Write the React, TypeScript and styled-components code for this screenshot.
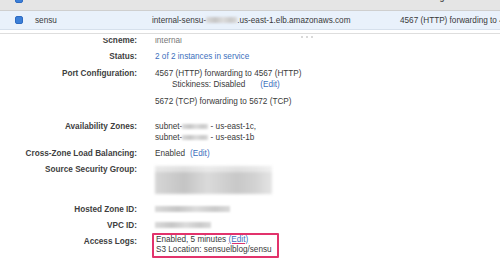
import React from 'react'
import styled, { createGlobalStyle } from 'styled-components'

const GlobalStyle = createGlobalStyle`
  html, body {
    margin: 0;
    padding: 0;
    background: #ffffff;
    overflow: hidden;
  }
  body {
    font-family: 'Liberation Sans', Arial, Helvetica, sans-serif;
    font-size: 8.2px;
    color: #3a3a3a;
  }
`

const Page = styled.div`
  width: 500px;
  height: 263px;
  overflow: hidden;
`

const GridRow = styled.div`
  display: grid;
  grid-template-columns: 35px 117px 248px 1fr;
  align-items: center;
  white-space: nowrap;
  overflow: hidden;
`

const HeaderRow = styled(GridRow)`
  height: 10px;
  align-items: start;
  background: #e5e5e5;
  border-bottom: 1px solid #cfcfcf;
`

const HeaderCell = styled.div`
  margin-top: -8px;
  line-height: 12px;
  font-weight: bold;
  color: #555;
`

const DataRow = styled(GridRow)`
  height: 18px;
  background: #e9f1fb;
  border-bottom: 1px solid #d6e0ec;
`

const CheckCell = styled.div<{ $clip?: boolean }>`
  display: flex;
  padding-left: 15px;
  margin-top: ${({ $clip }) => ($clip ? '-5px' : '0')};
`

const Check = styled.span`
  display: block;
  width: 6px;
  height: 6px;
  border-radius: 2px;
  background: #3c7fd8;
  border: 1px solid #2e6bc2;
`

const Cell = styled.div`
  color: #3a3a3a;
  display: flex;
  align-items: center;
`

const Splitter = styled.div`
  position: relative;
  height: 8px;
  box-sizing: border-box;
  padding-top: 3px;
  &::before {
    content: '';
    display: block;
    border-top: 1px solid #dedede;
  }
`

const Grip = styled.div`
  position: absolute;
  left: 301px;
  top: 6px;
  display: flex;
  gap: 3px;
  span {
    width: 2px;
    height: 2px;
    border-radius: 1px;
    background: #cccccc;
  }
`

const Details = styled.div`
  height: 226px;
  overflow: hidden;
`

const DetailsInner = styled.div`
  margin-top: -6px;
`

const Row = styled.div<{ $before?: number; $after?: number }>`
  display: grid;
  grid-template-columns: 137px 1fr;
  column-gap: 18px;
  padding: 2.5px 0;
  margin-top: ${({ $before }) => $before ?? 0}px;
  margin-bottom: ${({ $after }) => $after ?? 0}px;
  line-height: 11px;
`

const Label = styled.div`
  text-align: right;
  font-weight: bold;
  color: #404040;
  white-space: nowrap;
`

const Value = styled.div<{ $muted?: boolean }>`
  color: ${({ $muted }) => ($muted ? '#777' : '#3a3a3a')};
  white-space: nowrap;
`

const Para = styled.div`
  & + & {
    margin-top: 6px;
  }
`

const Indent = styled.div`
  padding-left: 17px;
`

const Link = styled.a<{ $gap?: number; $mark?: boolean }>`
  color: #3d6fbd;
  text-decoration: ${({ $mark }) => ($mark ? 'underline' : 'none')};
  text-decoration-color: #d8356f;
  text-underline-offset: 1px;
  margin-left: ${({ $gap }) => $gap ?? 0}px;
`

const Blur = styled.span<{ $w: number; $h: number }>`
  display: inline-block;
  vertical-align: middle;
  width: ${({ $w }) => $w}px;
  height: ${({ $h }) => $h}px;
  background: linear-gradient(90deg, #dadada, #c6c6c6 30%, #dcdcdc 55%, #cacaca 80%, #dadada);
  filter: blur(1px);
`

const BlurBlock = styled.div`
  width: 117px;
  height: 28px;
  margin-top: 2px;
  background:
    linear-gradient(180deg, rgba(255, 255, 255, 0.45) 0 22%, transparent 22%),
    linear-gradient(90deg, #d6d6d6, #c4c4c4 25%, #dadada 45%, #c8c8c8 70%, #d2d2d2 85%, #e4e4e4);
  filter: blur(1.5px);
`

const Highlight = styled.div`
  display: inline-block;
  margin: -3px 0 0 -3px;
  padding: 0 5px 0 2px;
  line-height: 10.5px;
  border: 2px solid #e2336c;
  border-radius: 1px;
`

const App = () => {
  return (
    <Page>
      <GlobalStyle />
      <HeaderRow>
        <CheckCell $clip>
          <Check />
        </CheckCell>
        <HeaderCell>Load Balancer Name</HeaderCell>
        <HeaderCell>DNS Name</HeaderCell>
        <HeaderCell>Port Configuration</HeaderCell>
      </HeaderRow>
      <DataRow>
        <CheckCell>
          <Check />
        </CheckCell>
        <Cell>sensu</Cell>
        <Cell>
          internal-sensu-<Blur $w={31} $h={6} />.us-east-1.elb.amazonaws.com
        </Cell>
        <Cell>4567 (HTTP) forwarding to 4567 (HTTP)</Cell>
      </DataRow>
      <Splitter>
        <Grip>
          <span />
          <span />
          <span />
        </Grip>
      </Splitter>
      <Details>
        <DetailsInner>
          <Row>
            <Label>Scheme:</Label>
            <Value $muted>internal</Value>
          </Row>
          <Row>
            <Label>Status:</Label>
            <Value>
              <Link href="#">2 of 2 instances in service</Link>
            </Value>
          </Row>
          <Row $before={1.5} $after={9}>
            <Label>Port Configuration:</Label>
            <Value>
              <Para>
                4567 (HTTP) forwarding to 4567 (HTTP)
                <Indent>
                  Stickiness: Disabled
                  <Link href="#" $gap={15}>
                    (Edit)
                  </Link>
                </Indent>
              </Para>
              <Para>5672 (TCP) forwarding to 5672 (TCP)</Para>
            </Value>
          </Row>
          <Row>
            <Label>Availability Zones:</Label>
            <Value>
              <div>
                subnet-<Blur $w={26} $h={5} /> - us-east-1c,
              </div>
              <div>
                subnet-<Blur $w={26} $h={5} /> - us-east-1b
              </div>
            </Value>
          </Row>
          <Row>
            <Label>Cross-Zone Load Balancing:</Label>
            <Value>
              Enabled
              <Link href="#" $gap={5}>
                (Edit)
              </Link>
            </Value>
          </Row>
          <Row $after={4.5}>
            <Label>Source Security Group:</Label>
            <Value>
              <BlurBlock />
            </Value>
          </Row>
          <Row>
            <Label>Hosted Zone ID:</Label>
            <Value>
              <Blur $w={75} $h={6} />
            </Value>
          </Row>
          <Row>
            <Label>VPC ID:</Label>
            <Value>
              <Blur $w={56} $h={6} />
            </Value>
          </Row>
          <Row>
            <Label>Access Logs:</Label>
            <Value>
              <Highlight>
                <div>
                  Enabled, 5 minutes
                  <Link href="#" $gap={2.5} $mark>
                    (Edit)
                  </Link>
                </div>
                <div>S3 Location: sensuelblog/sensu</div>
              </Highlight>
            </Value>
          </Row>
        </DetailsInner>
      </Details>
    </Page>
  )
}

export default App
